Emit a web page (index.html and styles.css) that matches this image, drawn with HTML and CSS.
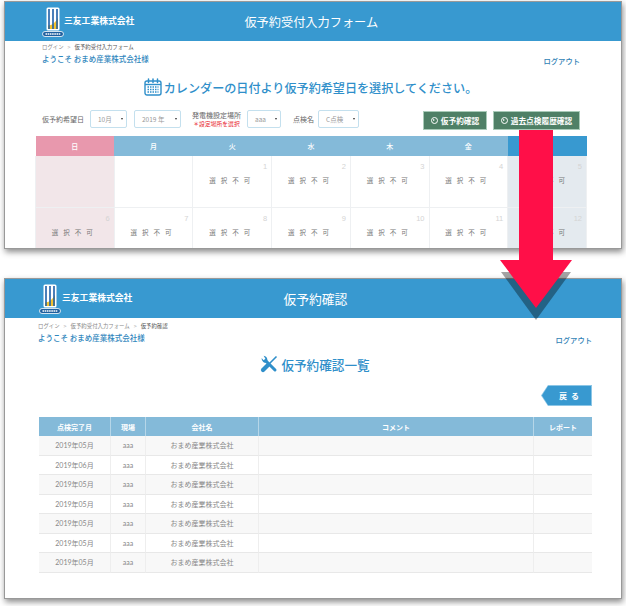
FILE: index.html
```html
<!DOCTYPE html>
<html lang="ja">
<head>
    <meta charset="UTF-8">
    <meta name="viewport" content="width=device-width, initial-scale=1.0">
    <title>仮予約確認</title>
    <link rel="stylesheet" href="styles.css">
</head>
<body>
    <svg width="0" height="0" class="defs">
        <symbol id="logo" viewBox="0 0 22 30">
            <rect x="4.5" y="0.5" width="13" height="23" rx="1.5" fill="#fff"/>
            <path d="M6 2 H16 V22 H6 Z" fill="#fff"/>
            <path d="M6 22 V18.5 C10 18.5 14 15 16 10.5 V22 Z" fill="#f2c230"/>
            <path d="M7 2 V22 M11 2 V22 M15 2 V22" stroke="#1f5fa8" stroke-width="1.6"/>
            <rect x="0.5" y="24.5" width="21" height="5" rx="2.5" fill="#1f5f9e" stroke="#fff" stroke-width="0.8"/>
            <path d="M3.5 27 H18.5" stroke="#fff" stroke-width="1.4" stroke-dasharray="1.6 .6"/>
        </symbol>
    </svg>

    <!-- 上: 受付入力フォーム -->
    <section class="shot shot-form">
        <header class="bar bar-form">
            <div class="brand">
                <svg class="logo"><use href="#logo"/></svg>
                <span class="brand-name">三友工業株式会社</span>
            </div>
            <div class="bar-title">仮予約受付入力フォーム</div>
        </header>
        <div class="sub sub-form">
            <div>
                <div class="crumbs">ログイン<i>&gt;</i><b>仮予約受付入力フォーム</b></div>
                <div class="welcome">ようこそ おまめ産業株式会社様</div>
            </div>
            <a class="logout">ログアウト</a>
        </div>
        <h1 class="page-title title-form">
            <svg class="cal-icon" viewBox="0 0 18 18" width="18" height="18">
                <rect x="1" y="3" width="16" height="14" rx="2" fill="none" stroke="#2f8fca" stroke-width="1.4"/>
                <path d="M1 6.5 H17" stroke="#2f8fca" stroke-width="1.4"/>
                <path d="M4.5 1 V4.5 M9 1 V4.5 M13.5 1 V4.5" stroke="#2f8fca" stroke-width="1.5" stroke-linecap="round"/>
                <path d="M3.5 9 H14.5 M3.5 11.5 H14.5 M3.5 14 H14.5" stroke="#2f8fca" stroke-width="1.3" stroke-dasharray="1.5 1"/>
            </svg>
            カレンダーの日付より仮予約希望日を選択してください。
        </h1>
        <div class="filters">
            <span class="label label-date">仮予約希望日</span>
            <span class="pick pick-month">10月</span>
            <span class="pick pick-year">2019 年</span>
            <span class="label label-place">発電機設定場所<em>＊設定場所を選択</em></span>
            <span class="pick pick-place">aaa</span>
            <span class="label label-check">点検名</span>
            <span class="pick pick-check">C点検</span>
            <a class="go-btn go-first"><span class="play"></span>仮予約確認</a>
            <a class="go-btn go-second"><span class="play"></span>過去点検履歴確認</a>
        </div>
        <table class="calendar">
            <thead>
                <tr>
                    <th class="sun">日</th><th>月</th><th>火</th><th>水</th><th>木</th><th>金</th><th class="sat">土</th>
                </tr>
            </thead>
            <tbody>
                <tr>
                    <td class="sun"></td>
                    <td></td>
                    <td><span class="num">1</span><span class="na">選択不可</span></td>
                    <td><span class="num">2</span><span class="na">選択不可</span></td>
                    <td><span class="num">3</span><span class="na">選択不可</span></td>
                    <td><span class="num">4</span><span class="na">選択不可</span></td>
                    <td class="sat"><span class="num">5</span><span class="na">選択不可</span></td>
                </tr>
                <tr>
                    <td class="sun"><span class="num">6</span><span class="na">選択不可</span></td>
                    <td><span class="num">7</span><span class="na">選択不可</span></td>
                    <td><span class="num">8</span><span class="na">選択不可</span></td>
                    <td><span class="num">9</span><span class="na">選択不可</span></td>
                    <td><span class="num">10</span><span class="na">選択不可</span></td>
                    <td><span class="num">11</span><span class="na">選択不可</span></td>
                    <td class="sat"><span class="num">12</span><span class="na">選択不可</span></td>
                </tr>
            </tbody>
        </table>
    </section>

    <!-- 下: 仮予約確認 -->
    <section class="shot shot-list">
        <header class="bar bar-list">
            <div class="brand">
                <svg class="logo"><use href="#logo"/></svg>
                <span class="brand-name">三友工業株式会社</span>
            </div>
            <div class="bar-title">仮予約確認</div>
        </header>
        <div class="sub sub-list">
            <div>
                <div class="crumbs">ログイン<i>&gt;</i>仮予約受付入力フォーム<i>&gt;</i><b>仮予約確認</b></div>
                <div class="welcome">ようこそ おまめ産業株式会社様</div>
            </div>
            <a class="logout">ログアウト</a>
        </div>
        <h1 class="page-title title-list">
            <svg class="tool-icon" viewBox="0 0 18 18" width="18" height="18">
                <path d="M16.5 1.5 L3 15" stroke="#2f8fca" stroke-width="1.6" fill="none"/>
                <path d="M8 10 L3 15" stroke="#2f8fca" stroke-width="4.2" stroke-linecap="round" fill="none"/>
                <path d="M6 6 L15 15" stroke="#2f8fca" stroke-width="3" stroke-linecap="round" fill="none"/>
                <path d="M1.6 3 A4.4 4.4 0 0 0 7.4 7.6 L7.4 4.8 A4.4 4.4 0 0 0 3.6 0.8 L5.4 3.8 L3.6 5.2 Z" fill="#2f8fca"/>
            </svg>
            仮予約確認一覧
        </h1>
        <div class="back-row"><a class="back-btn"><span>戻 る</span></a></div>
        <table class="results">
            <colgroup>
                <col class="c-date"><col class="c-site"><col class="c-company"><col><col class="c-report">
            </colgroup>
            <thead>
                <tr><th>点検完了月</th><th>現場</th><th>会社名</th><th>コメント</th><th>レポート</th></tr>
            </thead>
            <tbody>
                <tr><td>2019年05月</td><td>aaa</td><td>おまめ産業株式会社</td><td></td><td></td></tr>
                <tr><td>2019年06月</td><td>aaa</td><td>おまめ産業株式会社</td><td></td><td></td></tr>
                <tr><td>2019年05月</td><td>aaa</td><td>おまめ産業株式会社</td><td></td><td></td></tr>
                <tr><td>2019年05月</td><td>aaa</td><td>おまめ産業株式会社</td><td></td><td></td></tr>
                <tr><td>2019年05月</td><td>aaa</td><td>おまめ産業株式会社</td><td></td><td></td></tr>
                <tr><td>2019年05月</td><td>aaa</td><td>おまめ産業株式会社</td><td></td><td></td></tr>
                <tr><td>2019年05月</td><td>aaa</td><td>おまめ産業株式会社</td><td></td><td></td></tr>
            </tbody>
        </table>
    </section>

    <!-- 2枚の上に重なる矢印 -->
    <svg class="arrow" width="626" height="606" viewBox="0 0 626 606">
        <polygon class="arrow-shadow" points="501,272 571,272 536,320"/>
        <polygon class="arrow-body" points="519,130 553,130 553,260 572,260 536,308 500,260 519,260"/>
    </svg>
</body>
</html>
```

FILE: styles.css
```css
* {
    margin: 0;
    padding: 0;
    box-sizing: border-box;
}

body {
    font-family: 'Noto Sans CJK JP', 'Liberation Sans', sans-serif;
    background: white;
    width: 626px;
    height: 606px;
    padding-top: 1px;
    position: relative;
    overflow: hidden;
    color: #666;
}

.defs {
    position: absolute;
}

.shot {
    margin: 0 4px;
    width: 618px;
    background: white;
    border: 1px solid #999;
    box-shadow: 1px 3px 6px rgba(0, 0, 0, 0.45);
    overflow: hidden;
}

.shot-form {
    height: 248px;
}

.shot-list {
    margin-top: 29px;
    height: 321px;
}

.bar {
    height: 39px;
    background: #3899d0;
    display: flex;
    align-items: center;
    position: relative;
    color: white;
}

.brand {
    display: flex;
    align-items: center;
}

.bar-form .brand {
    padding-left: 37px;
}

.bar-list .brand {
    padding-left: 34px;
}

.logo {
    width: 22px;
    height: 30px;
}

.brand-name {
    font-size: 8.8px;
    font-weight: 700;
    white-space: nowrap;
    margin-top: -3px;
}

.bar-list .brand-name {
    margin-left: 1px;
}

.bar-title {
    font-size: 12.2px;
    white-space: nowrap;
}

.bar-form .bar-title {
    margin-left: 110px;
}

.bar-list .bar-title {
    margin-left: 151px;
    font-size: 12.8px;
}

.sub {
    display: flex;
    justify-content: space-between;
    align-items: flex-end;
}

.sub-form {
    padding: 1px 41px 0 37px;
}

.sub-list {
    padding: 3px 29px 0 33px;
}

.crumbs {
    font-size: 5.4px;
    line-height: 11px;
    color: #888;
    white-space: nowrap;
}

.crumbs i {
    font-style: normal;
    color: #bbb;
    margin: 0 4px;
}

.crumbs b {
    font-weight: 400;
    color: #555;
}

.welcome {
    font-size: 7.5px;
    line-height: 12px;
    font-weight: 500;
    color: #2f86bd;
    white-space: nowrap;
}

.logout {
    font-size: 7.3px;
    font-weight: 500;
    line-height: 12px;
    color: #2f7fb5;
    margin-bottom: -2px;
}

.page-title {
    display: flex;
    align-items: center;
    justify-content: center;
    font-weight: 500;
    color: #2f8fca;
    white-space: nowrap;
}

.title-form {
    font-size: 12.1px;
    height: 18px;
    margin-top: 13px;
    padding-right: 5px;
}

.cal-icon {
    margin-right: 2px;
}

.title-list {
    font-size: 12.6px;
    height: 18px;
    margin-top: 11px;
    padding-left: 4px;
}

.tool-icon {
    margin-right: 3px;
}

.filters {
    display: flex;
    align-items: center;
    height: 20px;
    margin-top: 13px;
    padding-left: 37px;
    font-size: 7px;
}

.label {
    white-space: nowrap;
    color: #666;
}

.label-place {
    display: flex;
    flex-direction: column;
    align-items: center;
    line-height: 9px;
    margin-left: 12px;
    width: 47px;
}

.label-place em {
    font-style: normal;
    font-size: 5.8px;
    line-height: 8px;
    color: #e8202a;
}

.label-check {
    margin-left: 12px;
}

.pick {
    height: 18px;
    border: 1.5px solid #c4e0ee;
    border-radius: 2px;
    display: flex;
    align-items: center;
    justify-content: space-between;
    padding: 0 3px 0 7px;
    color: #999;
    font-size: 6.5px;
    white-space: nowrap;
}

.pick::after {
    content: "";
    border-left: 1.5px solid transparent;
    border-right: 1.5px solid transparent;
    border-top: 2.5px solid #333;
}

.pick-month {
    width: 37px;
    margin-left: 6px;
}

.pick-year {
    width: 47px;
    margin-left: 7px;
}

.pick-place {
    width: 34px;
    margin-left: 7px;
}

.pick-check {
    width: 41px;
    margin-left: 4px;
}

.go-btn {
    height: 19px;
    background: #4f8066;
    border: 1px solid #a9cbb8;
    color: white;
    font-size: 7.7px;
    font-weight: 700;
    display: flex;
    align-items: center;
    justify-content: center;
    white-space: nowrap;
    margin-top: 2px;
}

.go-first {
    width: 64px;
    margin-left: 64px;
}

.go-second {
    width: 87px;
    margin-left: 6px;
}

.play {
    width: 7px;
    height: 7px;
    border: 0.8px solid white;
    border-radius: 50%;
    margin-right: 3px;
    display: flex;
    align-items: center;
    justify-content: center;
}

.play::after {
    content: "";
    border-top: 1.5px solid transparent;
    border-bottom: 1.5px solid transparent;
    border-left: 2px solid white;
}

.calendar {
    width: 552px;
    margin: 7px 0 0 30px;
    border-collapse: collapse;
    table-layout: fixed;
}

.calendar th {
    height: 20px;
    background: #84bad9;
    color: white;
    font-size: 7px;
    font-weight: 500;
}

.calendar th.sun {
    background: #e898ad;
}

.calendar th.sat {
    background: #3899d0;
}

.calendar td {
    height: 51px;
    border: 1px solid #eef0f2;
    border-top: 0;
    vertical-align: top;
    padding: 6px 4px 0;
    text-align: center;
}

.calendar td.sun {
    background: #f2e6e9;
}

.calendar td.sat {
    background: #e4eaef;
}

.num {
    display: block;
    text-align: right;
    font-size: 7.5px;
    line-height: 10px;
    color: #d4d4d4;
    font-family: 'Liberation Sans', sans-serif;
}

.na {
    display: block;
    font-size: 6.5px;
    line-height: 10px;
    margin-top: 3px;
    letter-spacing: 5px;
    color: #777;
    white-space: nowrap;
}

.back-row {
    display: flex;
    justify-content: flex-end;
    margin-top: 12px;
    padding-right: 29px;
}

.back-btn {
    width: 51px;
    height: 21px;
    background: #8cc6e6;
    position: relative;
    color: white;
    font-size: 8px;
    font-weight: 700;
    display: flex;
    align-items: center;
    justify-content: center;
    padding-left: 6px;
    clip-path: polygon(7px 0, 100% 0, 100% 100%, 7px 100%, 0 50%);
}

/* 内側の濃い色の面 */
.back-btn::before {
    content: "";
    position: absolute;
    left: 1px;
    top: 1px;
    right: 1px;
    bottom: 1px;
    background: #3899d0;
    clip-path: polygon(6px 0, 100% 0, 100% 100%, 6px 100%, 0 50%);
}

.back-btn span {
    position: relative;
    letter-spacing: 1px;
}

.results {
    width: 553px;
    margin: 11px 0 0 34px;
    border-collapse: separate;
    border-spacing: 0;
    table-layout: fixed;
    font-size: 7px;
}

.c-date {
    width: 72px;
}

.c-site {
    width: 35px;
}

.c-company {
    width: 113px;
}

.c-report {
    width: 58px;
}

.results th {
    height: 19px;
    background: #84bad9;
    color: white;
    font-weight: 700;
    border-right: 1px solid #b6d6e8;
}

.results th:last-child {
    border-right: 0;
}

.results td {
    height: 19.5px;
    text-align: center;
    font-family: Lato, 'Noto Sans CJK JP', sans-serif;
    color: #888;
    border-right: 1px solid #eee;
    border-bottom: 1px solid #e8e8e8;
    white-space: nowrap;
}

.results td:last-child {
    border-right: 0;
}

.results tbody tr:nth-child(odd) td {
    background: #f8f8f8;
}

.arrow {
    position: absolute;
    left: 0;
    top: 0;
    pointer-events: none;
}

.arrow-shadow {
    fill: rgba(0, 0, 0, 0.36);
}

.arrow-body {
    fill: #ff0f48;
}
```
